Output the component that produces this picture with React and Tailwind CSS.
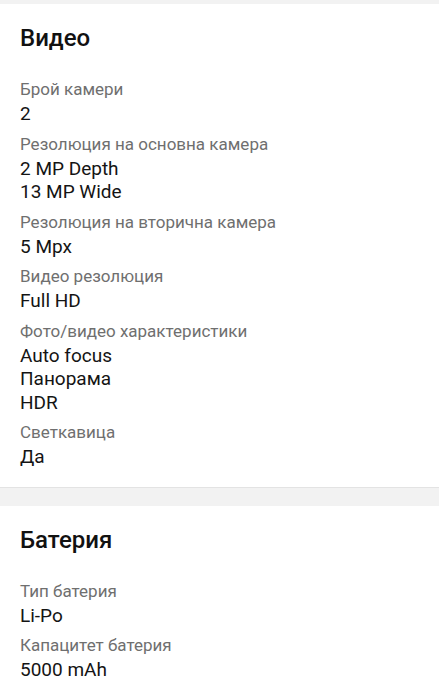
const sections = [
  {
    title: 'Видео',
    rows: [
      { label: 'Брой камери', values: ['2'] },
      { label: 'Резолюция на основна камера', values: ['2 MP Depth', '13 MP Wide'] },
      { label: 'Резолюция на вторична камера', values: ['5 Mpx'] },
      { label: 'Видео резолюция', values: ['Full HD'] },
      { label: 'Фото/видео характеристики', values: ['Auto focus', 'Панорама', 'HDR'] },
      { label: 'Светкавица', values: ['Да'] },
    ],
  },
  {
    title: 'Батерия',
    rows: [
      { label: 'Тип батерия', values: ['Li-Po'] },
      { label: 'Капацитет батерия', values: ['5000 mAh'] },
    ],
  },
];

function Section({ title, rows }) {
  return (
    <section className="bg-white px-5 pt-5 pb-[18px] border-b border-[#e3e3e3]">
      <h2 className="text-[24px] leading-[28px] font-medium text-[#111]">{title}</h2>
      <div className="mt-[26px] flex flex-col gap-[7px]">
        {rows.map((row) => (
          <div key={row.label}>
            <div className="text-[17px] leading-[22px] text-[#6f6f6f]">{row.label}</div>
            <div className="mt-0.5">
              {row.values.map((v) => (
                <div key={v} className="text-[19px] leading-[23.5px] text-[#141414]">{v}</div>
              ))}
            </div>
          </div>
        ))}
      </div>
    </section>
  );
}

export default function App() {
  return (
    <div className="min-h-screen bg-[#f2f2f2] pt-1 flex flex-col gap-[18px]" style={{ fontFamily: 'Roboto, "Noto Sans", sans-serif' }}>
      {sections.map((s) => (
        <Section key={s.title} title={s.title} rows={s.rows} />
      ))}
    </div>
  );
}
